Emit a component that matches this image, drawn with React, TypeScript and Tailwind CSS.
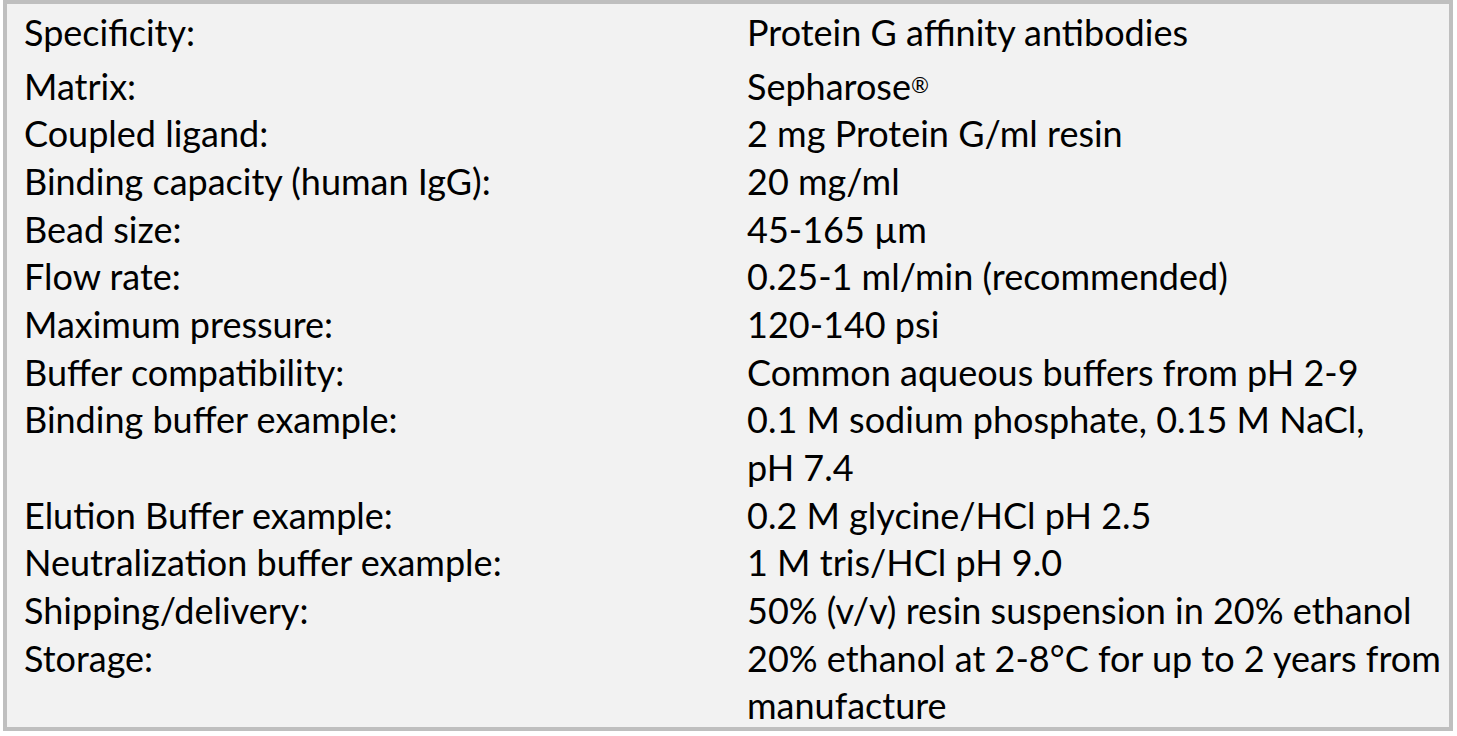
const rows: [string, React.ReactNode][] = [
  ["Specificity:", "Protein G affinity antibodies"],
  ["Matrix:", <>Sepharose<sup className="text-[0.6em] relative -top-[0.3em]">®</sup></>],
  ["Coupled ligand:", "2 mg Protein G/ml resin"],
  ["Binding capacity (human IgG):", "20 mg/ml"],
  ["Bead size:", "45-165 µm"],
  ["Flow rate:", "0.25-1 ml/min (recommended)"],
  ["Maximum pressure:", "120-140 psi"],
  ["Buffer compatibility:", "Common aqueous buffers from pH 2-9"],
  ["Binding buffer example:", <>0.1 M sodium phosphate, 0.15 M NaCl,<br />pH 7.4</>],
  ["Elution Buffer example:", "0.2 M glycine/HCl pH 2.5"],
  ["Neutralization buffer example:", "1 M tris/HCl pH 9.0"],
  ["Shipping/delivery:", "50% (v/v) resin suspension in 20% ethanol"],
  ["Storage:", <>20% ethanol at 2-8°C for up to 2 years from<br />manufacture</>],
];

export default function App() {
  return (
    <div className="w-[1457px] h-[736px] bg-white">
      <div
        className="ml-[3px] w-[1450px] h-[731px] border-4 border-[#bfbfbf] bg-[#f2f2f2] pl-[17px] pt-[5px] text-black text-[36px] leading-[47.65px] overflow-hidden"
        style={{ fontFamily: "Lato, 'Open Sans', sans-serif" }}
      >
        <div className="grid grid-cols-[723px_1fr]">
          {rows.map(([k, v], i) => (
            <div key={i} className="contents">
              <div className={i === 0 ? "pb-[6px]" : ""}>{k}</div>
              <div className={i === 0 ? "pb-[6px]" : ""}>{v}</div>
            </div>
          ))}
        </div>
      </div>
    </div>
  );
}
